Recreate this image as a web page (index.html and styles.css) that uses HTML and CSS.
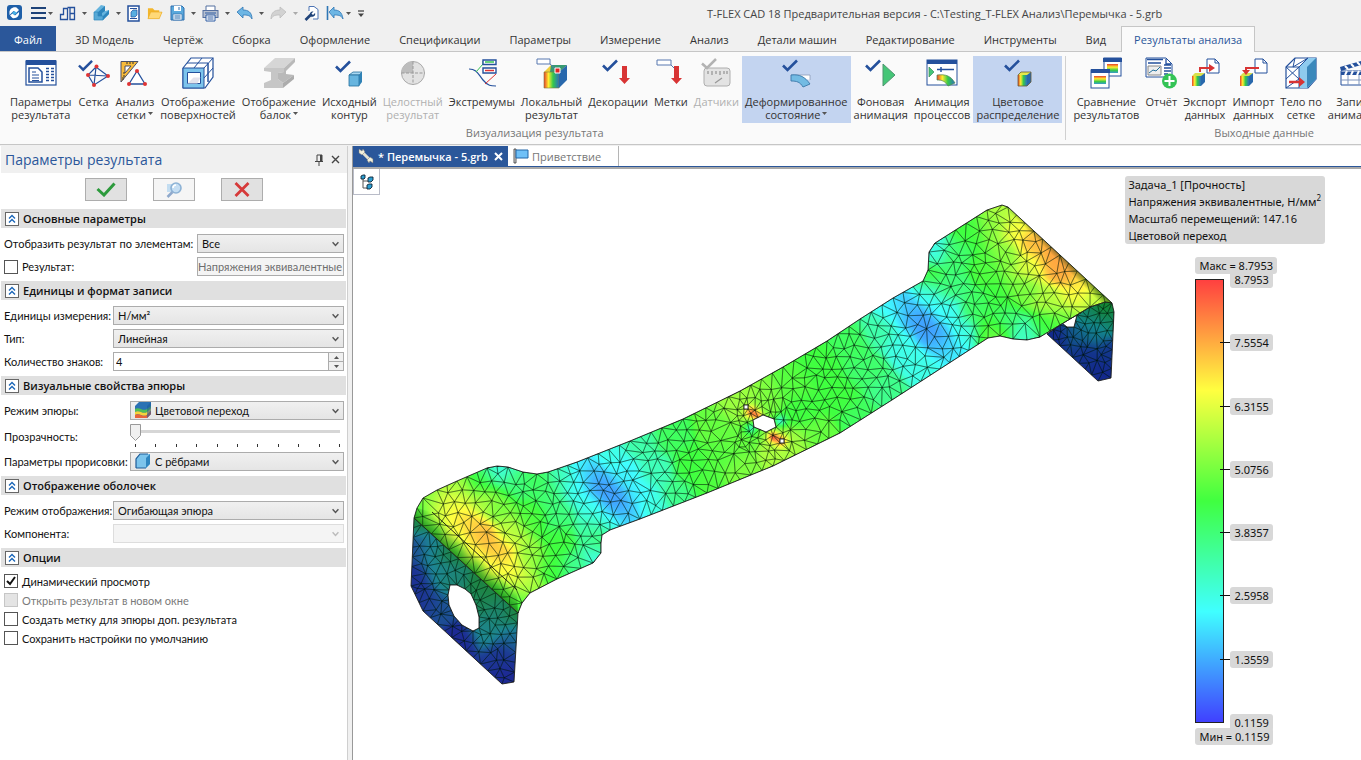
FILE: index.html
```html
<!DOCTYPE html>
<html lang="ru">
<head>
    <meta charset="UTF-8">
    <meta name="viewport" content="width=device-width, initial-scale=1.0">
    <title>T-FLEX CAD 18</title>
    <link rel="stylesheet" href="styles.css">
</head>
<body>
    <svg class="defs" aria-hidden="true">
        <defs>
            <linearGradient id="rainbow" x1="0" x2="1" y1="0" y2="0">
                <stop offset="0" stop-color="#e8402a"/><stop offset="0.3" stop-color="#ffee30"/>
                <stop offset="0.6" stop-color="#35c94a"/><stop offset="1" stop-color="#2b6fc0"/>
            </linearGradient>
            <linearGradient id="rainbowV" x1="0" x2="0" y1="0" y2="1">
                <stop offset="0" stop-color="#e8402a"/><stop offset="0.35" stop-color="#ffee30"/>
                <stop offset="0.7" stop-color="#35c94a"/><stop offset="1" stop-color="#3a9ad0"/>
            </linearGradient>
            <symbol id="check" viewBox="0 0 16 13"><path d="M1 6.500 5.500 11 15 1.500" fill="none" stroke="#24509c" stroke-width="2.600"/></symbol>
            <symbol id="caret" viewBox="0 0 5 3"><path d="M0 0h5L2.500 3z" fill="currentColor"/></symbol>
            <symbol id="chevron" viewBox="0 0 6 5"><path d="M.5 1 3 3.800 5.500 1" fill="none" stroke="currentColor" stroke-width="1.200"/></symbol>
            <symbol id="collapse" viewBox="0 0 9 10"><path d="M1.500 4.500 4.500 1.500 7.500 4.500M1.500 8.500 4.500 5.500 7.500 8.500" fill="none" stroke="#1b66b8" stroke-width="1.400"/></symbol>
        </defs>
    </svg>

    <header class="titlebar">
        <div class="quick">
            <svg class="q" viewBox="0 0 16 18"><rect x="1" y="1" width="15" height="15" rx="3" fill="#1f5fa8"/><path d="M3.500 9C3 5 7 2.500 10.500 3.500L13 6l-3 3-2.500-2-4 4zM13 8c.8 4-3 7-6.500 6L4 11.500l2.500-2L9 11.500z" fill="#fff"/><path d="m6 9 2.500-2L11 9l-2.500 2z" fill="#49b2e6"/></svg>
            <button class="qb menu" aria-label="Меню"><svg width="15" height="18" viewBox="0 0 15 18"><path d="M0 4h15M0 9h15M0 14h15" stroke="#1f4379" stroke-width="2"/></svg><svg class="caret"><use href="#caret"/></svg></button>
            <button class="qb" aria-label="Чертёж"><svg width="17" height="18" viewBox="0 0 17 18"><path d="M1.500 15.500v-5h3v-6h4v11zM11 3.500h4.500v12H11zM11 9.500h4.500M8.500 3.500H11" fill="none" stroke="#24509c" stroke-width="1.300"/></svg><svg class="caret"><use href="#caret"/></svg></button>
            <button class="qb" aria-label="3D"><svg width="17" height="18" viewBox="0 0 17 18"><path d="M1 8 8 1l4 1v5l4-1v4l-6 6H1z" fill="#66b4de"/><path d="M1 8h4v4h5v4H1z" fill="#58a9d6" stroke="#2d86bd" stroke-width=".7"/><path d="m5 8 7-6v5l-3 2v3H5zM10 12l6-6v4l-6 6z" fill="#2d86bd"/></svg><svg class="caret"><use href="#caret"/></svg></button>
            <button class="qb plain" aria-label="Новый"><svg width="13" height="18" viewBox="0 0 13 18"><rect x="1" y="2" width="11" height="15" fill="#fff" stroke="#24509c" stroke-width="1.500"/><path d="M3 4.500h7M3 14.500h7" stroke="#24509c"/><path d="m4 8 2-2h4v5l-2 2H4z" fill="#57aee0" stroke="#24509c" stroke-width=".7"/></svg></button>
            <button class="qb plain" aria-label="Открыть"><svg width="16" height="18" viewBox="0 0 17 18"><path d="M1 15V4h5l2 2h5v2h3l-3 7z" fill="#f3b62c"/><path d="M1 15 4 8h12l-3 7z" fill="#ffd978" stroke="#e8a820" stroke-width=".6"/></svg></button>
            <button class="qb" aria-label="Сохранить"><svg width="15" height="18" viewBox="0 0 15 18"><path d="M1 2h11l2 2v12H1z" fill="#5aa9dc" stroke="#2f6fae"/><path d="M4 2h7v5H4z" fill="#fff"/><path d="M3 10h9v6H3z" fill="#eef6fc" stroke="#2f6fae" stroke-width=".7"/><path d="M4.500 12h6M4.500 14h6M9 3v3" stroke="#2f6fae"/></svg><svg class="caret"><use href="#caret"/></svg></button>
            <button class="qb" aria-label="Печать"><svg width="17" height="18" viewBox="0 0 17 18"><path d="M4 2h9v5H4z" fill="#fff" stroke="#5570a0"/><rect x="1" y="6.500" width="15" height="7" fill="#b6bfcf" stroke="#5570a0"/><path d="M4 11h9v6H4z" fill="#fff" stroke="#2f5ca3"/><path d="M5.500 13h6M5.500 15h6M3 9h11" stroke="#2f5ca3"/></svg><svg class="caret"><use href="#caret"/></svg></button>
            <button class="qb" aria-label="Отменить"><svg width="17" height="18" viewBox="0 0 17 18"><path d="M1 8 7 3v3c5 0 9 2 9 9-2-4-5-4-9-4v3z" fill="#6db6e4" stroke="#2e76b5" stroke-width=".8"/></svg><svg class="caret"><use href="#caret"/></svg></button>
            <button class="qb off" aria-label="Повторить"><svg width="17" height="18" viewBox="0 0 17 18"><path d="m16 8-6-5v3c-5 0-9 2-9 9 2-4 5-4 9-4v3z" fill="#d2d2d2" stroke="#bdbdbd" stroke-width=".8"/></svg><svg class="caret"><use href="#caret"/></svg></button>
            <button class="qb plain" aria-label="Настройка"><svg width="15" height="18" viewBox="0 0 15 18"><path d="M5 7V2.500h5l4 3V15H9" fill="#fff" stroke="#4d74b4"/><path d="m1.500 16 5-5" stroke="#1f4379" stroke-width="2.600"/><path d="M9.500 7.500 7.500 9.500 9 11l2-2c1 2.500-1.500 4.500-4.500 3.500C4.500 10 6.500 7 9.500 7.500z" fill="#1f4379"/></svg></button>
            <button class="qb tight" aria-label="Вернуться"><svg width="18" height="18" viewBox="0 0 18 18"><path d="M1.500 2v14" stroke="#2e76b5" stroke-width="1.600"/><path d="m3 8 5-5v3c5 0 8 2 9 9-2-4-5-4-9-4v3z" fill="#6db6e4" stroke="#2e76b5" stroke-width=".8"/></svg><svg class="caret"><use href="#caret"/></svg></button>
            <button class="qb plain" aria-label="Ещё"><svg width="8" height="18" viewBox="0 0 8 18"><path d="M1 7h6" stroke="#444" stroke-width="1.300"/><path d="M1 9.500h6L4 13z" fill="#444"/></svg></button>
        </div>
        <div class="apptitle">T-FLEX CAD 18 Предварительная версия - C:\Testing_T-FLEX Анализ\Перемычка - 5.grb</div>
    </header>

    <nav class="tabs">
        <a class="file" href="#">Файл</a>
        <a href="#">3D Модель</a>
        <a href="#">Чертёж</a>
        <a href="#">Сборка</a>
        <a href="#">Оформление</a>
        <a href="#">Спецификации</a>
        <a href="#">Параметры</a>
        <a href="#">Измерение</a>
        <a href="#">Анализ</a>
        <a href="#">Детали машин</a>
        <a href="#">Редактирование</a>
        <a href="#">Инструменты</a>
        <a href="#">Вид</a>
        <a class="active" href="#">Результаты анализа</a>
    </nav>

    <div class="ribbon">
        <section class="group">
            <div class="tools">
                <button class="tool"><svg class="ico" viewBox="0 0 32 32"><rect x="1" y="4" width="30" height="24" fill="#fff" stroke="#24509c" stroke-width="1.200"/><path d="M1 3h30v5H1z" fill="#24509c"/><path d="M4 11h9l4 4v10H4z" fill="#fff" stroke="#24509c" stroke-width="1.500"/><path d="M7 15h4M7 18h7M7 21h7M7 23.500h7" stroke="#24509c"/><path d="M21 11.500h3M26 11.500h3M21 14.500h3M26 14.500h3M21 17.500h3M26 17.500h3M21 20.500h3M26 20.500h3M21 23.500h3M26 23.500h3" stroke="#24509c" stroke-width="1.300"/></svg><span>Параметры<br>результата</span></button>
                <button class="tool"><svg class="ico" viewBox="0 0 32 32"><path d="m18 10-8 8 6 10 14-9zM10 18l20 1M18 10l-2 18" fill="none" stroke="#24509c" stroke-width="1.200"/><use href="#check" x="0" y="2" width="15" height="13"/><g fill="#e03434"><circle cx="18.500" cy="9.500" r="2"/><circle cx="10" cy="18" r="2"/><circle cx="30" cy="19" r="2"/><circle cx="16" cy="28" r="2"/></g></svg><span>Сетка</span></button>
                <button class="tool"><svg class="ico" viewBox="0 0 32 32"><path d="M2 4.500h17L2 25z" fill="#f8bb3a" stroke="#4a4f66"/><path d="M6 9h6l-6 7z" fill="#fff" stroke="#4a4f66"/><path d="M4 23v-3M4 19h2M4 16h2M8 5v2M11 5v2M14 5v2" stroke="#333"/><path d="m18 14-8 13h16z" fill="#fff" stroke="#24509c" stroke-width="1.300"/><g fill="#e03434"><circle cx="18" cy="14" r="2"/><circle cx="10" cy="27" r="2"/><circle cx="26" cy="27" r="2"/></g></svg><span>Анализ<br>сетки<svg class="caret"><use href="#caret"/></svg></span></button>
                <button class="tool"><svg class="ico" viewBox="0 0 32 32"><path d="M1 11 9 1h22v19l-8 11H1z" fill="#fff" stroke="#24509c" stroke-width="1.200"/><path d="M1 11h21v20H1z" fill="#7cc4ec" stroke="#24509c"/><path d="M5.500 15.500h13v11h-13z" fill="#fff" stroke="#24509c"/><path d="m5.500 26.500 6-6h7l-3 6z" fill="#e3e3ec"/><path d="m22 11 9-10M5 6h21v19M12 11l8-10M26 6v19M22 21l9-10" fill="none" stroke="#24509c"/></svg><span>Отображение<br>поверхностей</span></button>
                <button class="tool"><svg class="ico" viewBox="0 0 32 32"><path d="M1 11 12 1h20L21 11z" fill="#d6d6d6"/><path d="M1 11h20v4l-6 1v6l5 4v5H1v-5l7-3v-8l-7-1z" fill="#c6c6c6"/><path d="m21 11 11-10v4l-9 9v3l8 1-11 8-5-4v-6l6-1z" fill="#b9b9b9"/><path d="m20 26 11-8v4L20 31z" fill="#acacac"/></svg><span>Отображение<br>балок<svg class="caret"><use href="#caret"/></svg></span></button>
                <button class="tool"><svg class="ico" viewBox="0 0 32 32"><use href="#check" x="2" y="3" width="16" height="13"/><path d="m16 18 4-3h9l-3 3z" fill="#a9d8f2" stroke="#24709c" stroke-width=".8"/><path d="M16 18h10v11H16z" fill="#67b5df" stroke="#24709c" stroke-width=".8"/><path d="m26 18 3-3v10l-3 4z" fill="#2f82b6"/></svg><span>Исходный<br>контур</span></button>
                <button class="tool" disabled><svg class="ico" viewBox="0 0 32 32"><circle cx="16" cy="16" r="11.500" fill="#e2e2e2" stroke="#aaa"/><path d="M16 16V4.500A11.500 11.500 0 0 0 4.500 16z" fill="#bdbdbd"/><path d="M16 4.500v23M4.500 16h23" stroke="#999" stroke-dasharray="3 1.500"/></svg><span>Целостный<br>результат</span></button>
                <button class="tool"><svg class="ico" viewBox="0 0 32 32"><path d="M3 12c8 0 9 5 14 11s8 6 13 6" fill="none" stroke="#24509c" stroke-width="1.200"/><path d="m10 15 7-8v-3h3" fill="none" stroke="#36c452"/><path d="M30 17 19 27" stroke="#e03434"/><path d="M17 3h13v4.500H17zM17 11h13v5H17z" fill="#fff" stroke="#24509c" stroke-width="1.400"/><path d="M19 5h9" stroke="#36c452" stroke-width="1.500"/><path d="M19 13.500h9" stroke="#e03434" stroke-width="1.500"/></svg><span>Экстремумы</span></button>
                <button class="tool"><svg class="ico" viewBox="0 0 32 32"><path d="m8 15 7-7h16l-8 7z" fill="#f2cf3c"/><path d="m15 8 16 0-8 7h-9z" fill="#379a72"/><path d="M8 15h15v16H8z" fill="url(#rainbow)" stroke="#7c7c3c" stroke-width=".6"/><path d="m23 15 8-7v15l-8 8z" fill="#2868ac"/><path d="M1 2h13v5H1z" fill="#fff" stroke="#5878b0"/><path d="m14 7 7 6" stroke="#5878b0"/><path d="M19 11h5v5h-5z" fill="#e02424" stroke="#fff"/></svg><span>Локальный<br>результат</span></button>
                <button class="tool"><svg class="ico" viewBox="0 0 32 32"><use href="#check" x="0" y="2" width="16" height="13"/><path d="M20 9h5v12h3l-5.500 6-5.500-6h3z" fill="#d83434"/></svg><span>Декорации</span></button>
                <button class="tool"><svg class="ico" viewBox="0 0 32 32"><path d="M2 3h14v5H2z" fill="#fff" stroke="#5878b0"/><path d="m16 8 5 5" stroke="#5878b0"/><path d="M19 9h5v12h3l-5.500 6-5.500-6h3z" fill="#d83434"/></svg><span>Метки</span></button>
                <button class="tool" disabled><svg class="ico" viewBox="0 0 32 32"><rect x="4" y="11" width="26" height="18" rx="3" fill="#e3e3e3" stroke="#aeaeae"/><path d="M8 14v3M12 14v4M16 14v3M20 14v4M24 14v3M27 14v3M15 26l7-5" stroke="#999" stroke-width="1.300"/><path d="M2 6.500 7 11 16 2" fill="none" stroke="#b3b3b3" stroke-width="2.500"/></svg><span>Датчики</span></button>
                <button class="tool on"><svg class="ico" viewBox="0 0 32 32"><use href="#check" x="2" y="2" width="16" height="13"/><path d="M11 18h19v5" fill="#fff" stroke="#8a9ab5" stroke-width=".8"/><path d="M11 18c9-1 14 2 19 9l-7 3c-3-5-6-6-12-6z" fill="#73bbe3" stroke="#3a77a8" stroke-width=".9"/></svg><span>Деформированное<br>состояние<svg class="caret"><use href="#caret"/></svg></span></button>
                <button class="tool"><svg class="ico" viewBox="0 0 32 32"><use href="#check" x="0" y="2" width="16" height="13"/><path d="m18 7 12 11-12 11z" fill="#45c677" stroke="#4e9570"/></svg><span>Фоновая<br>анимация</span></button>
                <button class="tool"><svg class="ico" viewBox="0 0 32 32"><rect x="1" y="3" width="30" height="25" fill="#fff" stroke="#24509c"/><path d="M1 3h30v4H1z" fill="#24509c"/><path d="m3 10 5 5-5 5z" fill="#45c677" stroke="#39865a" stroke-width=".7"/><path d="M11 12.500h17M15 10v5" stroke="#24509c" stroke-width="1.500"/><path d="M11 18c9-1 14 1 18 8l-7 3c-3-5-6-6-11-6z" fill="url(#rainbow)" stroke="#4d8752" stroke-width=".7"/></svg><span>Анимация<br>процессов</span></button>
                <button class="tool on"><svg class="ico" viewBox="0 0 32 32"><use href="#check" x="2" y="2" width="16" height="13"/><path d="m16 18 3-3h10l-3 3z" fill="#e6e84c"/><path d="M16 18h9v11h-9z" fill="url(#rainbow)"/><path d="m25 18 4-3v10l-4 4z" fill="#2868ac"/><path d="m16 18 3-3h10v10l-4 4h-9z" fill="none" stroke="#685a32" stroke-width=".8"/></svg><span>Цветовое<br>распределение</span></button>
            </div>
            <h2>Визуализация результата</h2>
        </section>
        <section class="group output">
            <div class="tools">
                <button class="tool"><svg class="ico" viewBox="0 0 32 32"><rect x="14" y="1" width="17" height="18" fill="#fff" stroke="#24509c"/><path d="M13 1h19v4H13z" fill="#24509c"/><path d="M17 7h11v9H17z" fill="url(#rainbowV)"/><rect x="1" y="13" width="18" height="18" fill="#fff" stroke="#24509c"/><path d="M1 12h19v4H1z" fill="#24509c"/><path d="M4 19h12v8H4z" fill="url(#rainbowV)"/></svg><span>Сравнение<br>результатов</span></button>
                <button class="tool"><svg class="ico" viewBox="0 0 32 32"><path d="M1 1h20l6 6v13H1z" fill="#fff" stroke="#24509c"/><path d="M2 2.500h16M3 6h13M19 8h7M19 11h7M19 14h7M19 17h4M21 2v5h5" fill="none" stroke="#24509c" stroke-width="1.300"/><path d="M3 9h13v9H3z" fill="#eee" stroke="#888"/><path d="m4 16 4-3 3 1 4-4" fill="none" stroke="#24709c"/><circle cx="24.500" cy="24" r="7.500" fill="#34c356"/><path d="M24.500 19v10M19.500 24h10" stroke="#fff" stroke-width="2"/></svg><span>Отчёт</span></button>
                <button class="tool"><svg class="ico" viewBox="0 0 32 32"><path d="M18 2h8l4 4v10H18z" fill="#fff" stroke="#24509c"/><path d="M26 2v4h4" fill="none" stroke="#24509c"/><path d="m3 19 3-3h10l-3 3z" fill="#d9e04c"/><path d="M3 19h9v10H3z" fill="url(#rainbow)"/><path d="m12 19 4-3v9l-4 4z" fill="#2868ac"/><path d="M11 15v-4h11" fill="none" stroke="#d83434" stroke-width="2"/><path d="m20 7 6 4-6 4z" fill="#d83434"/></svg><span>Экспорт<br>данных</span></button>
                <button class="tool"><svg class="ico" viewBox="0 0 32 32"><path d="M18 2h8l4 4v10H18z" fill="#fff" stroke="#24509c"/><path d="M26 2v4h4" fill="none" stroke="#24509c"/><path d="m3 19 3-3h10l-3 3z" fill="#d9e04c"/><path d="M3 19h9v10H3z" fill="url(#rainbow)"/><path d="m12 19 4-3v9l-4 4z" fill="#2868ac"/><path d="M22 11H9v3" fill="none" stroke="#d83434" stroke-width="2"/><path d="m5 13 4 5 4-5z" fill="#d83434"/></svg><span>Импорт<br>данных</span></button>
                <button class="tool"><svg class="ico" viewBox="0 0 32 32"><path d="M1 10 10 1h21v21l-8 9H1z" fill="#fff" stroke="#24509c" stroke-width="1.200"/><path d="M14 10 23 1h8v21l-9 9h-8z" fill="#8ecbee"/><path d="m22 10 9-9v21l-9 9z" fill="#3b88bb"/><path d="M1 10h13v21M1 10l13 12L1 31M14 10 1 22M1 10 10 1l-2 9M14 10 23 1 8 10" fill="none" stroke="#24509c"/><path d="M4 25h12" stroke="#d83434" stroke-width="2.500"/><path d="m14 20 6 5-6 5z" fill="#d83434"/></svg><span>Тело по<br>сетке</span></button>
                <button class="tool"><svg class="ico" viewBox="0 0 32 32"><path d="m1 10 28-8v4L2 14z" fill="#24509c"/><path d="m6 9 3 3M12 7l3 3M18 5l3 3" stroke="#fff" stroke-width="2"/><path d="M2 14h28v14H2z" fill="#fff" stroke="#24509c"/><path d="M2 15h28v3H2z" fill="#24509c"/><path d="m6 18 2-4M12 18l2-4M18 18l2-4M24 18l2-4" stroke="#fff" stroke-width="2"/><path d="M2 23h28M9 18v10M20 18v10" stroke="#8096bd"/></svg><span>Запись<br>анимации</span></button>
            </div>
            <h2>Выходные данные</h2>
        </section>
    </div>

    <main class="work">
        <aside class="panel">
            <div class="panel-head">
                <h1>Параметры результата</h1>
                <button class="mini" aria-label="Закрепить"><svg width="10" height="12" viewBox="0 0 10 12"><path d="M3 1h5v6M3 1v6M1 7.500h8M5 8v4" fill="none" stroke="#444"/><path d="M6 1h2v6H6z" fill="#444"/></svg></button>
                <button class="mini" aria-label="Закрыть"><svg width="9" height="9" viewBox="0 0 9 9"><path d="m1 1 7 7M8 1 1 8" stroke="#444" stroke-width="1.400"/></svg></button>
            </div>
            <div class="actions">
                <button aria-label="Принять"><svg width="20" height="15" viewBox="0 0 20 15"><path d="m1.500 7 6.500 6L18.500 1.500" fill="none" stroke="#2c9a3c" stroke-width="3"/></svg></button>
                <button class="light" aria-label="Просмотр"><svg width="18" height="18" viewBox="0 0 18 18"><path d="M2 3h9v8H2z" fill="#c3ddf1"/><circle cx="11" cy="7" r="5" fill="#c5def3" stroke="#8db2d5" stroke-width="1.600"/><path d="m7.500 11-5 5" stroke="#8fa9cc" stroke-width="2.500"/><path d="M8 7a3 3 0 0 1 3-3" fill="none" stroke="#fff" stroke-width="1.500"/></svg></button>
                <button aria-label="Отмена"><svg width="16" height="15" viewBox="0 0 16 15"><path d="m1.500 1 13 13M14.500 1l-13 13" stroke="#d63a3a" stroke-width="2.800"/></svg></button>
            </div>

            <section>
                <h3><svg><use href="#collapse"/></svg>Основные параметры</h3>
                <div class="rows">
                    <div class="row"><label for="elems">Отобразить результат по элементам:</label><span class="field w-s"><select id="elems"><option>Все</option></select><svg class="chev"><use href="#chevron"/></svg></span></div>
                    <div class="row"><input type="checkbox" id="res"><label for="res">Результат:</label><span class="field w-s"><input type="text" class="off-text" aria-label="Результат" value="Напряжения эквивалентные" readonly></span></div>
                </div>
            </section>
            <section>
                <h3><svg><use href="#collapse"/></svg>Единицы и формат записи</h3>
                <div class="rows">
                    <div class="row"><label for="units">Единицы измерения:</label><span class="field w-l"><select id="units"><option>Н/мм²</option></select><svg class="chev"><use href="#chevron"/></svg></span></div>
                    <div class="row"><label for="type">Тип:</label><span class="field w-l"><select id="type"><option>Линейная</option></select><svg class="chev"><use href="#chevron"/></svg></span></div>
                    <div class="row"><label for="digits">Количество знаков:</label><span class="field w-l spin"><input type="text" id="digits" value="4"><span class="spinners"><button aria-label="Больше"><svg class="caret up"><use href="#caret"/></svg></button><button aria-label="Меньше"><svg class="caret"><use href="#caret"/></svg></button></span></span></div>
                </div>
            </section>
            <section>
                <h3><svg><use href="#collapse"/></svg>Визуальные свойства эпюры</h3>
                <div class="rows">
                    <div class="row"><label for="mode">Режим эпюры:</label><span class="field w-m"><select id="mode" class="pic"><option>Цветовой переход</option></select><svg class="pic-ico" viewBox="0 0 16 16"><path d="M0 4 4 0h12v12l-4 4H0z" fill="#2b72b4"/><path d="M0 7c4-3 8 3 12 0l4-3v2l-4 4c-4 3-8-3-12 0z" fill="#4fbe55"/><path d="M0 10c4-3 8 3 12 0l4-4v3l-4 4c-4 3-8-3-12 0z" fill="#f6d33a"/><path d="M0 13c4-3 8 3 12 0l4-4v3l-4 4H0z" fill="#e8643a"/><path d="m12 4 4-4v12l-4 4z" fill="#1c5a9c" opacity=".55"/></svg><svg class="chev"><use href="#chevron"/></svg></span></div>
                    <div class="row slider-row"><label for="alpha">Прозрачность:</label><span class="field w-m slider"><input type="range" id="alpha" min="0" max="10" value="0"><span class="ticks"><i></i><i></i><i></i><i></i><i></i><i></i><i></i><i></i><i></i><i></i><i></i></span></span></div>
                    <div class="row"><label for="draw">Параметры прорисовки:</label><span class="field w-m"><select id="draw" class="pic"><option>С рёбрами</option></select><svg class="pic-ico" viewBox="0 0 16 16"><path d="M1 5 5 1h10v10l-4 4H1z" fill="#7cc4ec"/><path d="m11 5 4-4v10l-4 4z" fill="#2f86c0"/><path d="M1 15V6l4-5h8M1 15h10" fill="none" stroke="#1e5c98" stroke-width="1.200"/></svg><svg class="chev"><use href="#chevron"/></svg></span></div>
                </div>
            </section>
            <section>
                <h3><svg><use href="#collapse"/></svg>Отображение оболочек</h3>
                <div class="rows">
                    <div class="row"><label for="shell">Режим отображения:</label><span class="field w-l"><select id="shell"><option>Огибающая эпюра</option></select><svg class="chev"><use href="#chevron"/></svg></span></div>
                    <div class="row"><label for="comp">Компонента:</label><span class="field w-l"><select id="comp" disabled><option></option></select><svg class="chev dim"><use href="#chevron"/></svg></span></div>
                </div>
            </section>
            <section>
                <h3><svg><use href="#collapse"/></svg>Опции</h3>
                <div class="checks">
                    <label><input type="checkbox" checked>Динамический просмотр</label>
                    <label class="dim"><input type="checkbox" disabled>Открыть результат в новом окне</label>
                    <label><input type="checkbox">Создать метку для эпюры доп. результата</label>
                    <label><input type="checkbox">Сохранить настройки по умолчанию</label>
                </div>
            </section>
        </aside>

        <div class="docs">
            <div class="doc-tabs">
                <div class="doc current"><svg width="16" height="16" viewBox="0 0 16 16"><path d="m4 4 8 8" stroke="#e4e2d2" stroke-width="3"/><path d="M1 1v4l3 2 3-3-2-3-1 2zM15 15v-4l-3-2-3 3 2 3 1-2z" fill="#f3f1dc" stroke="#777" stroke-width=".5"/></svg>* Перемычка - 5.grb<button aria-label="Закрыть вкладку"><svg width="9" height="9" viewBox="0 0 9 9"><path d="m1 1 7 7M8 1 1 8" stroke="#fff" stroke-width="2"/></svg></button></div>
                <div class="doc"><svg width="16" height="16" viewBox="0 0 16 16"><path d="M1 1h2v14H1z" fill="#ddd" stroke="#333" stroke-width=".8"/><path d="M3 2h12v8H3z" fill="#6fc0f7" stroke="#2266a8"/></svg>Приветствие</div>
            </div>
            <div class="view">
                <canvas id="scene" width="800" height="592"></canvas>
                <button class="tree" aria-label="Дерево модели"><svg width="14" height="16" viewBox="0 0 14 16"><path d="M3 5v9h4M3 7h5" fill="none" stroke="#555"/><g fill="#2b9fd2" stroke="#123" stroke-width=".9"><path d="m1 2 2-1h2v3L4 5H1zM8 4l2-1h3v3l-2 2H8zM7 11l2-1h3v3l-2 2H7z"/></g></svg></button>
                <div class="info">Задача_1 [Прочность]<br>Напряжения эквивалентные, Н/мм<sup>2</sup><br>Масштаб перемещений: 147.16<br>Цветовой переход</div>
                <div class="legend">
                    <span class="tag">Макс = 8.7953</span>
                    <div class="scale">
                        <div class="bar"></div>
                        <ul>
                            <li>8.7953</li><li>7.5554</li><li>6.3155</li><li>5.0756</li><li>3.8357</li><li>2.5958</li><li>1.3559</li><li>0.1159</li>
                        </ul>
                    </div>
                    <span class="tag">Мин = 0.1159</span>
                </div>
            </div>
        </div>
    </main>
    <script src="mesh.js"></script>
</body>
</html>
```
FILE: styles.css
```css
* {
    box-sizing: border-box;
}
body {
    margin: 0;
    height: 100vh;
    display: flex;
    flex-direction: column;
    overflow: hidden;
    background-color: #f0f0f0;
    font-family: "Open Sans", "Noto Sans", sans-serif;
    font-size: 11px;
    color: #333;
}
button {
    font: inherit;
    color: inherit;
    border: 0;
    padding: 0;
    background: none;
}
.defs {
    position: absolute;
    width: 0;
    height: 0;
}
.caret {
    width: 5px;
    height: 3px;
    color: #555;
}

/* title bar */
.titlebar {
    display: flex;
    align-items: center;
    height: 26px;
    padding-left: 6px;
    flex: none;
}
.quick {
    display: flex;
    align-items: center;
    width: 701px;
}
.q {
    width: 16px;
    height: 18px;
    margin-right: 9px;
}
.qb {
    display: flex;
    align-items: center;
    gap: 6px;
    margin-right: 6px;
}
.qb.plain {
    margin-right: 7px;
}
.qb.menu,
.qb.tight {
    gap: 2px;
}
.qb.off .caret {
    color: #aaa;
}
.apptitle {
    color: #444;
    white-space: nowrap;
}

/* ribbon tabs */
.tabs {
    display: flex;
    gap: 1px;
    flex: none;
    height: 26px;
    border-bottom: 1px solid #c6c6c6;
}
.tabs a {
    padding: 0 14px;
    line-height: 27px;
    color: #333;
    text-decoration: none;
    white-space: nowrap;
}
.tabs .file {
    background-color: #2b579a;
    color: #fff;
    margin-right: 4px;
}
.tabs .active {
    height: 26px;
    padding: 0 12px;
    border: 1px solid #c6c6c6;
    border-bottom: 0;
    background-color: #fafafa;
    color: #2b579a;
    line-height: 25px;
}

/* ribbon */
.ribbon {
    display: flex;
    flex: none;
    height: 93px;
    background-color: #fafafa;
    border-bottom: 1px solid #c6c6c6;
    overflow: hidden;
}
.group {
    flex: none;
    margin: 4px 0;
    padding: 0 3px 0 7px;
    border-right: 1px solid #d0d0d0;
}
.group.output {
    padding: 0 72px 0 4px;
}
.group h2 {
    margin: 0;
    font-size: 11px;
    font-weight: normal;
    line-height: 19px;
    text-align: center;
    color: #777;
}
.output h2 {
    margin-right: -72px;
}
.tools {
    display: flex;
}
.tool {
    display: flex;
    flex-direction: column;
    align-items: center;
    height: 67px;
    padding: 1px 3px 0;
    line-height: 13px;
    white-space: nowrap;
    text-align: center;
}
.tool .ico {
    width: 32px;
    height: 32px;
    margin-bottom: 6px;
}
.tool .caret {
    margin-left: 2px;
    vertical-align: 4px;
}
.tool:disabled {
    color: #b0b0b0;
}
.tool.on {
    background-color: #c3d4f0;
}

/* work area */
.work {
    display: flex;
    flex: 1;
    min-height: 0;
    padding-top: 1px;
}
.panel {
    width: 348px;
    flex: none;
    padding-left: 1px;
    background-color: #fff;
    border-right: 1px solid #cfcfcf;
    color: #111;
    font-family: Lato, "Open Sans", sans-serif;
}
.panel-head {
    display: flex;
    align-items: center;
    height: 27px;
    padding: 0 7px 0 4px;
    background-color: #f0f0f0;
}
.panel-head h1 {
    flex: 1;
    margin: 0;
    font-family: "Open Sans", sans-serif;
    font-size: 14px;
    font-weight: normal;
    line-height: 22px;
    color: #2b579a;
}
.mini {
    display: flex;
    margin-left: 7px;
}
.actions {
    display: flex;
    justify-content: center;
    gap: 26px;
    padding: 5px 0 8px;
}
.actions button {
    display: flex;
    align-items: center;
    justify-content: center;
    width: 42px;
    height: 23px;
    border: 1px solid #adadad;
    background-color: #e1e1e1;
}
.actions .light {
    background-color: #f5f5f5;
}
.panel section {
    margin-right: 1px;
}
.panel h3 {
    display: flex;
    align-items: center;
    gap: 4px;
    height: 19px;
    margin: 0;
    padding-left: 4px;
    background-color: #e0e0e0;
    font-family: "Open Sans", sans-serif;
    font-size: 11px;
    font-weight: 600;
    color: #111;
}
.panel h3 svg {
    width: 14px;
    height: 14px;
    padding: 1px;
    border: 1px solid #666;
    background-color: #fff;
}
.rows {
    display: flex;
    flex-direction: column;
    gap: 4px;
    padding: 6px 2px 5px 3px;
}
.row {
    display: flex;
    align-items: center;
    height: 19px;
    white-space: nowrap;
}
.slider-row {
    height: 24px;
}
.field {
    position: relative;
    display: flex;
    height: 19px;
    margin-left: auto;
}
.w-s {
    width: 147px;
}
.w-m {
    width: 214px;
}
.w-l {
    width: 231px;
}
select,
input[type="text"] {
    width: 100%;
    height: 19px;
    margin: 0;
    padding: 0 4px;
    appearance: none;
    border: 1px solid #acacac;
    border-radius: 0;
    background: linear-gradient(#f0f0f0, #e5e5e5);
    font: inherit;
    color: #111;
}
input[type="text"] {
    padding: 0 2px;
    background: #fff;
}
input.off-text {
    padding: 0;
    background: #f4f4f4;
    color: #6d6d6d;
}
select.pic {
    padding-left: 24px;
}
select:disabled {
    border-color: #d0d0d0;
    background: #f0f0f0;
}
.pic-ico {
    position: absolute;
    left: 5px;
    top: 1px;
    width: 16px;
    height: 16px;
}
.chev {
    position: absolute;
    right: 5px;
    top: 7px;
    width: 7px;
    height: 6px;
    color: #555;
}
.chev.dim {
    color: #bbb;
}
.spinners {
    display: flex;
    flex-direction: column;
    flex: none;
    width: 16px;
    margin-left: -1px;
}
.spinners button {
    display: flex;
    flex: 1;
    align-items: center;
    justify-content: center;
    border: 1px solid #acacac;
    background-color: #f0f0f0;
}
.spinners button + button {
    border-top: 0;
}
.up {
    transform: rotate(180deg);
}
input[type="checkbox"] {
    appearance: none;
    flex: none;
    width: 14px;
    height: 14px;
    margin: 0 4px 0 0;
    border: 1px solid #555;
    background-color: #fff;
}
input[type="checkbox"]:checked {
    background-image: url("data:image/svg+xml,%3Csvg xmlns='http://www.w3.org/2000/svg' viewBox='0 0 12 12'%3E%3Cpath d='M2 6l3 3 5-7' fill='none' stroke='%23111' stroke-width='2'/%3E%3C/svg%3E");
}
input[type="checkbox"]:disabled {
    border-color: #c6c6c6;
    background-color: #e4e4e4;
}
.slider {
    flex-direction: column;
    height: 24px;
}
input[type="range"] {
    appearance: none;
    width: 210px;
    height: 17px;
    margin: 0;
    background: linear-gradient(#d6d6d6, #d6d6d6) 0 6px / 100% 3px no-repeat;
}
input[type="range"]::-webkit-slider-thumb {
    appearance: none;
    width: 11px;
    height: 17px;
    background: url("data:image/svg+xml,%3Csvg xmlns='http://www.w3.org/2000/svg' viewBox='0 0 11 17'%3E%3Cpath d='M.5.5h10v11l-5 5-5-5z' fill='%23f0f0f0' stroke='%23999'/%3E%3C/svg%3E");
}
.ticks {
    display: flex;
    justify-content: space-between;
    width: 205px;
    margin-left: 5px;
    padding-top: 3px;
}
.ticks i {
    width: 1px;
    height: 3px;
    background-color: #333;
}
.checks {
    display: flex;
    flex-direction: column;
    gap: 1px;
    padding: 5px 3px;
}
.checks label {
    display: flex;
    align-items: center;
    height: 18px;
}
.checks .dim {
    color: #7a7a7a;
}

/* documents */
.docs {
    display: flex;
    flex: 1;
    flex-direction: column;
    min-width: 0;
    margin-left: 4px;
    border-left: 1px solid #999;
    background-color: #fff;
}
.doc-tabs {
    display: flex;
    flex: none;
    height: 21px;
    border-bottom: 1px solid #2b579a;
}
.doc {
    display: flex;
    align-items: center;
    gap: 3px;
    padding: 0 17px 0 5px;
    border-right: 1px solid #b5b5b5;
    color: #777;
    white-space: nowrap;
}
.doc.current {
    gap: 4px;
    padding: 0 5px;
    border-right: 0;
    background-color: #2b579a;
    color: #fff;
    font-weight: 600;
}
.doc button {
    display: flex;
    margin-left: 2px;
}
.view {
    position: relative;
    flex: 1;
    min-height: 0;
    overflow: hidden;
    border-top: 2px solid #a9a9a9;
}
.view canvas {
    display: block;
}
.tree {
    position: absolute;
    left: 0;
    top: 0;
    display: flex;
    align-items: center;
    justify-content: center;
    width: 27px;
    height: 26px;
    border: 1px solid #b9bcc8;
    border-top: 0;
    background-color: #fff;
}
.info {
    position: absolute;
    top: 7px;
    right: 36px;
    padding: 0 4px 0 3px;
    border-radius: 3px;
    background-color: #d8d8d8;
    color: #111;
    font-family: "Noto Sans", sans-serif;
    line-height: 17px;
    white-space: nowrap;
}
.info sup {
    font-size: 8px;
    line-height: 0;
}
.legend {
    position: absolute;
    top: 88px;
    right: 84px;
    display: flex;
    flex-direction: column;
    align-items: flex-start;
    color: #111;
    font-family: "Noto Sans", sans-serif;
    line-height: 17px;
}
.tag,
.legend li {
    padding: 0 4px;
    border-radius: 3px;
    background-color: #d8d8d8;
}
.scale {
    display: flex;
    height: 444px;
    margin: 5px 0;
}
.bar {
    width: 29px;
    border: 1px solid #222;
    background: linear-gradient(#ff4040, #ffff40 25%, #40ff40 50%, #40ffff 75%, #4040ff);
}
.legend ul {
    display: flex;
    flex-direction: column;
    justify-content: space-between;
    margin: -8px 0 -8px 6px;
    padding: 0;
    list-style: none;
}
.legend li {
    position: relative;
}
.legend li::before {
    content: "";
    position: absolute;
    left: -10px;
    top: 8px;
    width: 10px;
    height: 1px;
    background-color: #111;
}
.legend li:first-child::before,
.legend li:last-child::before {
    display: none;
}
```
FILE: mesh.js
```js
// stress plot of the deformed bracket, points are in window units
var canvas = document.getElementById('scene');
var ctx = canvas.getContext('2d');
var ox = 353, oy = 169;

var sheet = [[414,518],[417,508],[423,498],[437,490],[457,481],[487,468],[497,466],[508,467],[523,472],[537,474],[548,472],
    [577,462],[630,441],[683,419],[740,391],[783,367],[827,341],[860,319],[893,298],[923,281],[928,270],[929,252],[935,243],
    [987,210],[1002,205],[1008,207],[1112,303],[1105,302],[1090,307],[1060,325],[1040,337],[1027,340],[1013,339],[1000,336],
    [988,338],[940,369],[892,400],[840,433],[773,466],[707,493],[640,519],[610,530],[602,535],[601,543],[601,553],[593,563],
    [557,579],[530,593],[522,603],[518,613]];
var leftSide = [[414,518],[411,586],[423,611],[502,684],[514,682],[518,613]];
var rightSide = [[1047,334],[1060,325],[1090,307],[1105,302],[1112,303],[1114,312],[1111,378],[1098,381]];
var leftHole = [[450,585],[457,585],[465,589],[471,594],[476,605],[479,617],[479,628],[473,631],[462,625],[454,616],[449,605],[448,595]];
var rightHole = [[1062,323],[1077,315],[1074,327],[1067,327]];
var midHole = [[753,420],[763,415],[774,419],[776,427],[766,432],[754,427]];

// x, y, relative stress 0..1
var sheetField = [[470,526,.82],[484,540,.85],[497,551,.82],[445,507,.74],[455,500,.72],[460,515,.78],[435,508,.7],[510,570,.76],
    [520,583,.7],[430,500,.58],[418,512,.5],[457,487,.62],[480,500,.64],[500,505,.58],[510,530,.66],[530,560,.62],[525,590,.6],
    [455,533,.73],[475,551,.75],[493,567,.75],[430,534,.52],[450,552,.5],[470,570,.5],[490,588,.5],[505,601,.5],
    [518,606,.5],[550,565,.5],[575,565,.4],[597,556,.28],[600,540,.45],[560,540,.5],[530,515,.52],[497,468,.3],[515,485,.42],
    [537,480,.46],[548,495,.43],[560,515,.42],[590,530,.36],[480,480,.48],[560,475,.34],[580,470,.24],[592,475,.15],[600,485,.12],
    [612,497,.12],[620,507,.13],[630,518,.2],[575,490,.27],[590,508,.28],[608,522,.28],[608,457,.28],[622,472,.24],[637,492,.24],
    [652,508,.29],[640,442,.36],[655,470,.34],[680,495,.4],[670,435,.46],[690,465,.5],[705,485,.52],[715,425,.55],[720,455,.53],
    [735,405,.62],[745,395,.62],[735,440,.55],[740,470,.58],[780,455,.64],[795,445,.63],[765,395,.58],[790,385,.53],[800,410,.5],
    [815,435,.55],[820,365,.5],[840,395,.5],[860,415,.46],[850,345,.46],[865,370,.44],[880,330,.36],[885,390,.4],[892,310,.25],
    [905,308,.16],[915,320,.13],[928,330,.12],[940,344,.16],[952,354,.23],[900,340,.28],[915,360,.28],[930,370,.28],[925,292,.27],
    [945,310,.26],[965,332,.28],[928,275,.5],[932,250,.28],[950,285,.42],[955,255,.44],[975,308,.45],[988,325,.5],[992,335,.58],
    [1025,335,.33],[1005,318,.42],[1000,300,.5],[985,265,.52],[970,230,.5],[990,225,.6],[1003,210,.65],[1015,228,.74],
    [1032,243,.84],[1048,257,.87],[1063,271,.86],[1080,286,.78],[1100,298,.68],[1030,265,.7],[1005,255,.6],[1020,290,.58],
    [1050,300,.65],[1070,300,.74],[1045,325,.5],[1065,316,.55],[1090,304,.66]];
var leftField = [[416,520,.42],[450,552,.42],[485,586,.44],[516,612,.46],[412,545,.1],[430,545,.25],[414,580,.04],[440,570,.25],
    [450,582,.33],[425,600,.05],[440,605,.12],[460,640,.02],[478,600,.38],[485,630,.28],[500,615,.33],[512,635,.18],[500,655,.05],[505,680,.02]];
var rightField = [[1105,305,.48],[1085,312,.35],[1112,320,.35],[1095,330,.22],[1075,330,.15],[1055,335,.02],[1112,350,.05],[1100,375,.02],[1085,355,.04]];
// hot and cold spots round the middle hole
var spots = [[750,411,.28,6],[757,415,.25,5],[772,436,.3,5],[780,440,.25,6],[779,420,-.2,6],[750,427,-.2,6]];

var seed = 7;
function rnd() {
    seed = (seed * 16807) % 2147483647;
    return seed / 2147483647;
}

function inside(x, y, poly) {
    var res = false;
    for (var i = 0, j = poly.length - 1; i < poly.length; j = i++) {
        var a = poly[i], b = poly[j];
        if ((a[1] > y) !== (b[1] > y) && x < (b[0] - a[0]) * (y - a[1]) / (b[1] - a[1]) + a[0]) res = !res;
    }
    return res;
}

function stress(x, y, field) {
    var sum = 0, w = 0;
    field.forEach(function (p) {
        var d = (p[0] - x) * (p[0] - x) + (p[1] - y) * (p[1] - y);
        var k = Math.exp(-d / 160) + 1e-7 / (d + 1);
        sum += k * p[2];
        w += k;
    });
    var v = sum / w;
    if (field === sheetField) {
        spots.forEach(function (s) {
            v += s[2] * Math.exp(-((s[0] - x) * (s[0] - x) + (s[1] - y) * (s[1] - y)) / (s[3] * s[3]));
        });
    }
    return Math.max(0, Math.min(1, v));
}

function color(v) {
    var stops = [[64,64,255],[64,255,255],[64,255,64],[255,255,64],[255,64,64]];
    var i = Math.min(3, Math.floor(v * 4)), t = v * 4 - i;
    return stops[i].map(function (c, n) { return c + (stops[i + 1][n] - c) * t; });
}

function path(poly) {
    poly.forEach(function (p, i) {
        if (i) ctx.lineTo(p[0], p[1]); else ctx.moveTo(p[0], p[1]);
    });
    ctx.closePath();
}

// points along an outline
function outline(poly, step) {
    var res = [];
    for (var i = 0; i < poly.length; i++) {
        var a = poly[i], b = poly[(i + 1) % poly.length];
        var n = Math.max(1, Math.round(Math.hypot(b[0] - a[0], b[1] - a[1]) / step));
        for (var k = 0; k < n; k++) {
            res.push([a[0] + (b[0] - a[0]) * k / n + rnd() * .01, a[1] + (b[1] - a[1]) * k / n + rnd() * .01]);
        }
    }
    return res;
}

function circum(a, b, c, pts) {
    var ax = pts[a][0], ay = pts[a][1], bx = pts[b][0] - ax, by = pts[b][1] - ay, cx = pts[c][0] - ax, cy = pts[c][1] - ay;
    var d = 2 * (bx * cy - by * cx), bb = bx * bx + by * by, cc = cx * cx + cy * cy;
    var ux = (cy * bb - by * cc) / d, uy = (bx * cc - cx * bb) / d;
    return { v: [a, b, c], x: ax + ux, y: ay + uy, r: ux * ux + uy * uy };
}

function triangulate(points) {
    var n = points.length;
    var pts = points.concat([[-5000, -5000], [8000, -5000], [700, 9000]]);
    var tris = [circum(n, n + 1, n + 2, pts)];
    for (var i = 0; i < n; i++) {
        var edges = {};
        tris = tris.filter(function (t) {
            var dx = t.x - pts[i][0], dy = t.y - pts[i][1];
            if (dx * dx + dy * dy > t.r) return true;
            for (var k = 0; k < 3; k++) {
                var a = t.v[k], b = t.v[(k + 1) % 3];
                var key = Math.min(a, b) + '_' + Math.max(a, b);
                edges[key] = edges[key] ? 0 : [a, b];
            }
            return false;
        });
        for (var key in edges) {
            if (edges[key]) tris.push(circum(edges[key][0], edges[key][1], i, pts));
        }
    }
    return tris.filter(function (t) { return Math.max.apply(null, t.v) < n; });
}

function drawPart(poly, holes, field, shade, step) {
    var x, y;
    var img = document.createElement('canvas');
    img.width = canvas.width / 2;
    img.height = canvas.height / 2;
    var ic = img.getContext('2d');
    var data = ic.createImageData(img.width, img.height);
    for (y = 0; y < img.height; y++) {
        for (x = 0; x < img.width; x++) {
            var c = color(stress(x * 2 + ox, y * 2 + oy, field));
            data.data.set([c[0] * shade[0], c[1] * shade[1], c[2] * shade[2], 255], (y * img.width + x) * 4);
        }
    }
    ic.putImageData(data, 0, 0);

    ctx.save();
    ctx.beginPath();
    path(poly);
    holes.forEach(path);
    ctx.clip('evenodd');
    ctx.drawImage(img, ox, oy, canvas.width, canvas.height);

    var pts = outline(poly, step);
    holes.forEach(function (h) { pts = pts.concat(outline(h, 6)); });
    function add(px, py, gap) {
        if (!inside(px, py, poly) || holes.some(function (h) { return inside(px, py, h); })) return;
        var near = pts.some(function (q) { return Math.hypot(q[0] - px, q[1] - py) < gap; });
        if (!near) pts.push([px, py]);
    }
    if (field === sheetField) {
        for (var k = 0; k < 200; k++) {
            add(764 + (rnd() - .5) * 60, 424 + (rnd() - .5) * 56, 5);
        }
    }
    var row = 0;
    for (y = 190; y < 700; y += step * .87) {
        row++;
        for (x = 400 + (row % 2) * step / 2; x < 1120; x += step) {
            add(x + (rnd() - .5) * step * .5, y + (rnd() - .5) * step * .5, step * .6);
        }
    }
    ctx.beginPath();
    triangulate(pts).forEach(function (t) {
        path(t.v.map(function (n) { return pts[n]; }));
    });
    ctx.strokeStyle = 'rgba(0, 25, 10, .62)';
    ctx.lineWidth = .55;
    ctx.stroke();
    ctx.restore();

    ctx.beginPath();
    path(poly);
    holes.forEach(path);
    ctx.strokeStyle = '#222';
    ctx.lineWidth = .9;
    ctx.stroke();
}

function band(poly, x1, y1, x2, y2, alpha) {
    var g = ctx.createLinearGradient(x1, y1, x2, y2);
    g.addColorStop(0, 'rgba(0, 40, 0, 0)');
    g.addColorStop(1, 'rgba(0, 40, 0, ' + alpha + ')');
    ctx.beginPath();
    path(poly);
    ctx.fillStyle = g;
    ctx.fill();
}

ctx.translate(-ox, -oy);
drawPart(rightSide, [rightHole], rightField, [.3, .52, .55], 9);
drawPart(leftSide, [leftHole], leftField, [.45, .52, .58], 10);
drawPart(sheet, [midHole, [[744,405],[748,405],[748,409],[744,409]], [[780,439],[784,439],[784,443],[780,443]]], sheetField, [1, 1, 1], 12);
band([[414,518],[417,508],[432,512],[517,590],[518,613]], 474, 552, 463, 564, .5);
band([[1002,205],[1008,207],[1112,303],[1098,302],[1000,212]], 1055, 258, 1061, 252, .6);

// bend line
ctx.beginPath();
ctx.moveTo(432, 512);
ctx.lineTo(517, 590);
ctx.strokeStyle = '#111';
ctx.lineWidth = .9;
ctx.stroke();
```
